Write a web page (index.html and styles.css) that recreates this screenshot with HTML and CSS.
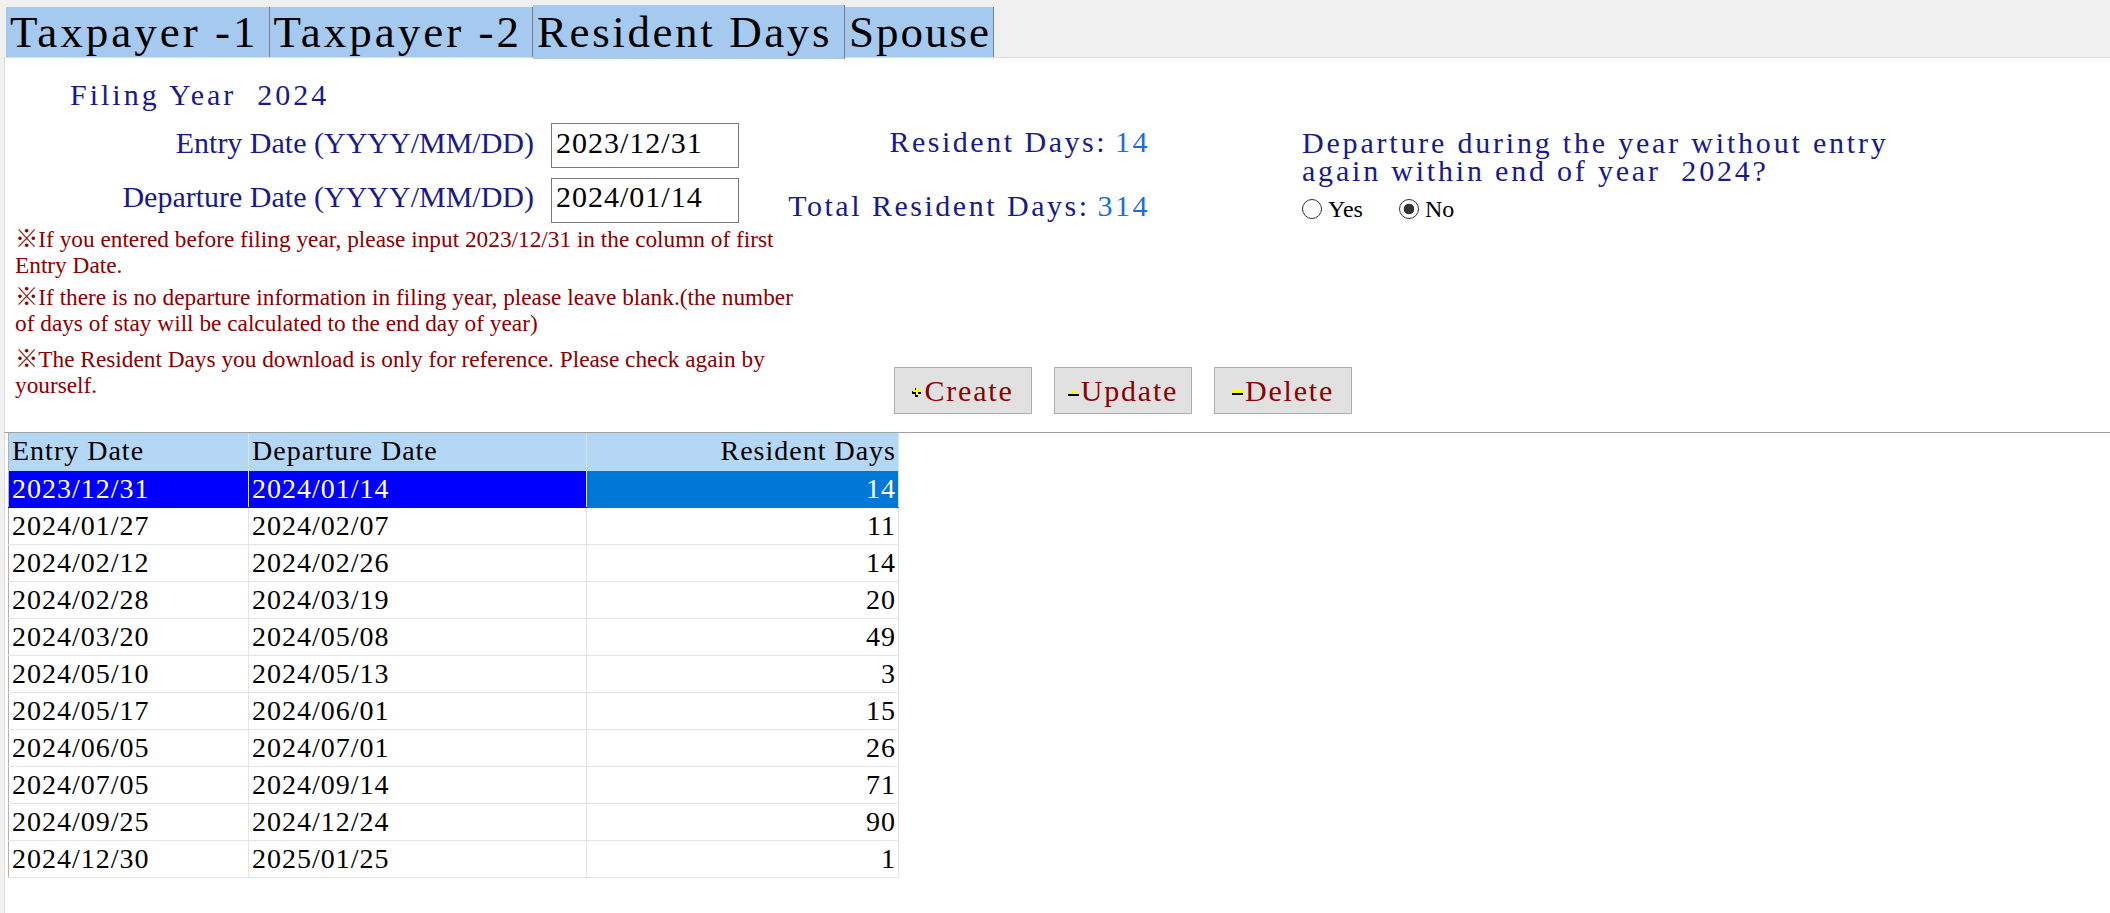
FILE: index.html
```html
<!DOCTYPE html>
<html lang="en">
<head>
  <meta charset="UTF-8" />
  <title>Resident Days</title>
  <link rel="stylesheet" href="styles.css">
</head>
<body>

  <div class="tabs">
    <div class="tab">Taxpayer -1</div>
    <div class="tab">Taxpayer -2</div>
    <div class="tab active">Resident Days</div>
    <div class="tab last">Spouse</div>
  </div>

  <div class="form-panel">
    <div class="filing">Filing Year&nbsp; 2024</div>

    <div class="head">
      <div class="dates">
        <label class="date-label">Entry Date (YYYY/MM/DD)</label>
        <input class="date-input" type="text" value="2023/12/31">
        <label class="date-label">Departure Date (YYYY/MM/DD)</label>
        <input class="date-input" type="text" value="2024/01/14">
      </div>

      <div class="summary">
        <div class="sum-line"><span class="sum-label">Resident Days:</span><span class="num">14</span></div>
        <div class="sum-line total"><span class="sum-label">Total Resident Days:</span><span class="num">314</span></div>
      </div>

      <div class="question">
        <div class="q-text">Departure during the year without entry<br>again within end of year&nbsp; 2024?</div>
        <div class="radios">
          <label class="opt"><input class="radio" type="radio" name="depart">Yes</label>
          <label class="opt"><input class="radio" type="radio" name="depart" checked>No</label>
        </div>
      </div>
    </div>

    <div class="lower">
      <div class="notes">
        <p>※If you entered before filing year, please input 2023/12/31 in the column of first Entry Date.</p>
        <p>※If there is no departure information in filing year, please leave blank.(the number of days of stay will be calculated to the end day of year)</p>
        <p class="last">※The Resident Days you download is only for reference. Please check again by yourself.</p>
      </div>
      <div class="actions">
        <button class="btn">
          <svg class="ico" width="10" height="10" viewBox="0 0 10 10">
            <path d="M3 1h3v3h3v3H6v3H3V7H0V4h3z" fill="#000"/>
            <path d="M4 0h2v3h3v2H6v3H4V5H1V3h3z" fill="#ffff00"/>
          </svg>Create
        </button>
        <button class="btn">
          <svg class="ico" width="11" height="10" viewBox="0 0 11 10">
            <path d="M1 7L5.5 2.5 10 7z" fill="#ffff00"/>
            <rect x="0" y="7" width="11" height="2" fill="#000"/>
          </svg>Update
        </button>
        <button class="btn">
          <svg class="ico" width="11" height="10" viewBox="0 0 11 10">
            <rect x="0" y="3" width="11" height="3" fill="#ffff00"/>
            <rect x="0" y="6" width="11" height="2" fill="#000"/>
          </svg>Delete
        </button>
      </div>
    </div>
  </div>

  <div class="grid-panel">
    <table class="days">
      <thead>
        <tr>
          <th class="c-entry">Entry Date</th>
          <th class="c-depart">Departure Date</th>
          <th class="c-days">Resident Days</th>
        </tr>
      </thead>
      <tbody>
        <tr class="selected"><td>2023/12/31</td><td>2024/01/14</td><td class="c-days focus">14</td></tr>
        <tr><td>2024/01/27</td><td>2024/02/07</td><td class="c-days">11</td></tr>
        <tr><td>2024/02/12</td><td>2024/02/26</td><td class="c-days">14</td></tr>
        <tr><td>2024/02/28</td><td>2024/03/19</td><td class="c-days">20</td></tr>
        <tr><td>2024/03/20</td><td>2024/05/08</td><td class="c-days">49</td></tr>
        <tr><td>2024/05/10</td><td>2024/05/13</td><td class="c-days">3</td></tr>
        <tr><td>2024/05/17</td><td>2024/06/01</td><td class="c-days">15</td></tr>
        <tr><td>2024/06/05</td><td>2024/07/01</td><td class="c-days">26</td></tr>
        <tr><td>2024/07/05</td><td>2024/09/14</td><td class="c-days">71</td></tr>
        <tr><td>2024/09/25</td><td>2024/12/24</td><td class="c-days">90</td></tr>
        <tr><td>2024/12/30</td><td>2025/01/25</td><td class="c-days">1</td></tr>
      </tbody>
    </table>
  </div>

</body>
</html>
```

FILE: styles.css
```css
:root {
  --navy: #1a1a8a;
  --blue: #1a6fd1;
  --note: #8b0000;
  --tab: #a6c9ef;
  --head: #b3d7f5;
}
body {
  margin: 0;
  min-height: 100vh;
  display: flex;
  flex-direction: column;
  background: #f0f0f0;
  font-family: "Liberation Serif", "Noto Sans CJK TC", serif;
  color: #000;
}

/* tab strip */
.tabs {
  display: flex;
  align-items: flex-start;
  padding: 7px 0 0 6px;
}
.tab {
  height: 50px;
  box-sizing: border-box;
  padding: 0 10px 0 4px;
  background: var(--tab);
  border-right: 1px solid #7f7f7f;
  font-size: 45px;
  line-height: 50px;
  letter-spacing: 3px;
  white-space: nowrap;
}
.tab.active {
  position: relative;
  z-index: 1;
  height: 54px;
  margin: -2px 0 -2px;
  padding: 2px 12px 0 4px;
  letter-spacing: 2.6px;
}
.tab.last {
  padding-right: 2px;
  letter-spacing: 2px;
}

/* upper form */
.form-panel {
  margin-left: 4px;
  background: #fff;
  border-top: 1px solid #dcdcdc;
  border-left: 1px solid #dcdcdc;
  padding: 20px 0 18px;
}
.filing {
  padding-left: 65px;
  font-size: 30px;
  line-height: 34px;
  color: var(--navy);
  letter-spacing: 3px;
}
.head {
  display: flex;
  margin-top: 11px;
}
.dates {
  display: grid;
  grid-template-columns: 529px 188px;
  column-gap: 17px;
  row-gap: 9px;
  align-items: center;
}
.date-label {
  text-align: right;
  font-size: 30px;
  line-height: 34px;
  padding-bottom: 6px;
  color: var(--navy);
  white-space: nowrap;
}
.date-input {
  width: 188px;
  height: 45px;
  box-sizing: border-box;
  margin: 0;
  padding: 0 4px 6px;
  border: 1px solid #7a7a7a;
  font-family: inherit;
  font-size: 30px;
  letter-spacing: 1px;
  color: #000;
  background: #fff;
  outline: none;
}
.summary {
  width: 411px;
  padding-top: 2px;
  font-size: 30px;
  line-height: 34px;
  color: var(--navy);
  letter-spacing: 2.5px;
}
.sum-line {
  display: flex;
  justify-content: flex-end;
  gap: 8px;
}
.sum-line.total {
  margin-top: 30px;
}
.num {
  color: var(--blue);
}
.question {
  margin-left: 152px;
  padding-top: 6px;
  color: var(--navy);
}
.q-text {
  font-size: 30px;
  line-height: 28px;
  letter-spacing: 2.8px;
  white-space: nowrap;
}
.radios {
  display: flex;
  gap: 36px;
  margin-top: 12px;
  font-size: 24px;
  line-height: 24px;
  color: #000;
}
.opt {
  display: flex;
  align-items: center;
  gap: 6px;
}
.radio {
  appearance: none;
  width: 20px;
  height: 20px;
  margin: 0;
  border: 1px solid #333;
  border-radius: 50%;
  background: #fff;
}
.radio:checked {
  background: radial-gradient(circle, #333 0 5px, #fff 5.6px);
}

.lower {
  display: flex;
  align-items: flex-end;
  margin-top: 3px;
}
.notes {
  width: 795px;
  margin-left: 10px;
  padding-bottom: 16px;
  font-size: 23.3px;
  line-height: 26px;
  color: var(--note);
}
.notes p {
  margin: 0 0 6px;
}
.notes p.last {
  margin: 10px 0 0;
}
.actions {
  display: flex;
  gap: 22px;
  margin-left: 84px;
}
.btn {
  width: 138px;
  height: 47px;
  display: flex;
  align-items: center;
  justify-content: center;
  padding: 0;
  background: #e1e1e1;
  border: 1px solid #adadad;
  font-family: inherit;
  font-size: 30px;
  letter-spacing: 1.8px;
  color: var(--note);
}
.ico {
  margin-right: 2px;
  margin-top: 2px;
}

/* grid */
.grid-panel {
  flex: 1;
  margin-left: 4px;
  background: #fff;
  border-top: 1px solid #a0a0a0;
  border-left: 1px solid #dcdcdc;
}
.days {
  margin-left: 3px;
  border-collapse: collapse;
  border-left: 1px solid #b0b0b0;
  font-size: 28px;
  letter-spacing: 1px;
}
.days th,
.days td {
  height: 37px;
  box-sizing: border-box;
  padding: 0 2px 0 3px;
  line-height: 34px;
  text-align: left;
  font-weight: normal;
  white-space: nowrap;
  border-right: 1px solid #e4e4e4;
  border-bottom: 1px solid #e4e4e4;
}
.days th {
  background: var(--head);
  border-right-color: #d4e6f6;
  border-bottom-color: #b3d7f5;
}
.c-entry { width: 240px; }
.c-depart { width: 338px; }
.days .c-days {
  width: 312px;
  text-align: right;
}
.selected td {
  background: #0000ff;
  color: #fff;
  border-bottom-color: #0000ff;
}
.selected td.focus {
  background: #0078d7;
  border-bottom-color: #0078d7;
}
```
